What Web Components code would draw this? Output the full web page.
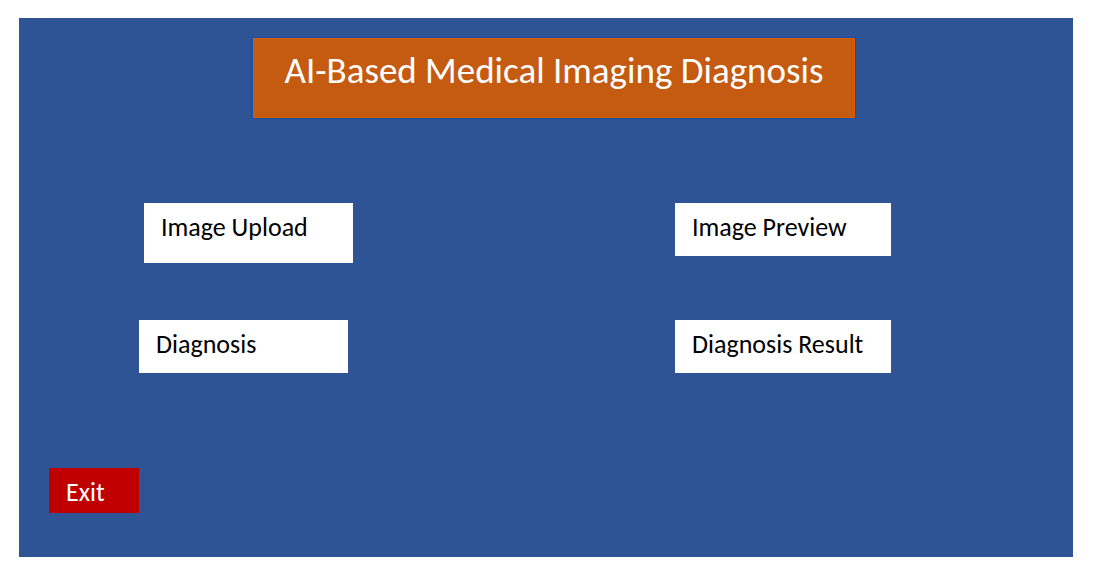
<!DOCTYPE html>
<html lang="en">
<head>
<meta charset="utf-8">
<meta name="viewport" content="width=device-width, initial-scale=1">
<title>AI-Based Medical Imaging Diagnosis</title>
<style>
  body { margin: 0; background: #fff; font-family: Calibri, Carlito, Lato, sans-serif; }
</style>
</head>
<body>
<diagnosis-app></diagnosis-app>
<script>
  class AppTitle extends HTMLElement {
    constructor() {
      super();
      this.attachShadow({ mode: 'open' }).innerHTML = `
        <style>
          :host { display: block; }
          h1 {
            box-sizing: border-box; margin: 0; padding: 12px 28px 26px;
            background: #c55a11; color: #fff;
            border: 1px solid #e05a00; outline: 1px solid #0f4fae;
            font-size: 37px; line-height: 40px; font-weight: 400;
            text-align: center; white-space: nowrap;
          }
        </style>
        <h1><slot></slot></h1>`;
    }
  }
  customElements.define('app-title', AppTitle);

  class AppButton extends HTMLElement {
    constructor() {
      super();
      this.attachShadow({ mode: 'open' }).innerHTML = `
        <style>
          :host { display: block; color: #000; --fill: #fff; --pad: 9px 17px 14px; }
          :host([tall]) { --pad: 9px 17px 21px; }
          :host([danger]) { color: #fff; --fill: #c00000; --pad: 9px 17px 6px; }
          button {
            display: block; width: 100%; margin: 0; border: 0; border-radius: 0;
            padding: var(--pad); background: var(--fill); color: inherit;
            font-family: inherit; font-size: 26px; line-height: 30px;
            text-align: left; white-space: nowrap; cursor: pointer;
          }
        </style>
        <button type="button"><slot></slot></button>`;
    }
  }
  customElements.define('app-button', AppButton);

  class DiagnosisApp extends HTMLElement {
    constructor() {
      super();
      this.attachShadow({ mode: 'open' }).innerHTML = `
        <style>
          :host { display: block; padding: 18px 22px 24px 19px; }
          main { background: #2f5496; padding: 20px 30px 44px; }
          header { display: flex; justify-content: center; padding-left: 16px; }
          app-title { width: 602px; }
          nav {
            display: grid; grid-template-columns: 214px 216px;
            justify-content: space-between; align-items: start;
            row-gap: 57px; padding: 85px 152px 95px 90px;
          }
          .left { width: 209px; }
          .upload { justify-self: end; }
          .exit { width: 90px; }
        </style>
        <main>
          <header><app-title>AI-Based Medical Imaging Diagnosis</app-title></header>
          <nav>
            <app-button class="left upload" tall>Image Upload</app-button>
            <app-button>Image Preview</app-button>
            <app-button class="left">Diagnosis</app-button>
            <app-button>Diagnosis Result</app-button>
          </nav>
          <app-button class="exit" danger>Exit</app-button>
        </main>`;
    }
  }
  customElements.define('diagnosis-app', DiagnosisApp);
</script>
</body>
</html>
